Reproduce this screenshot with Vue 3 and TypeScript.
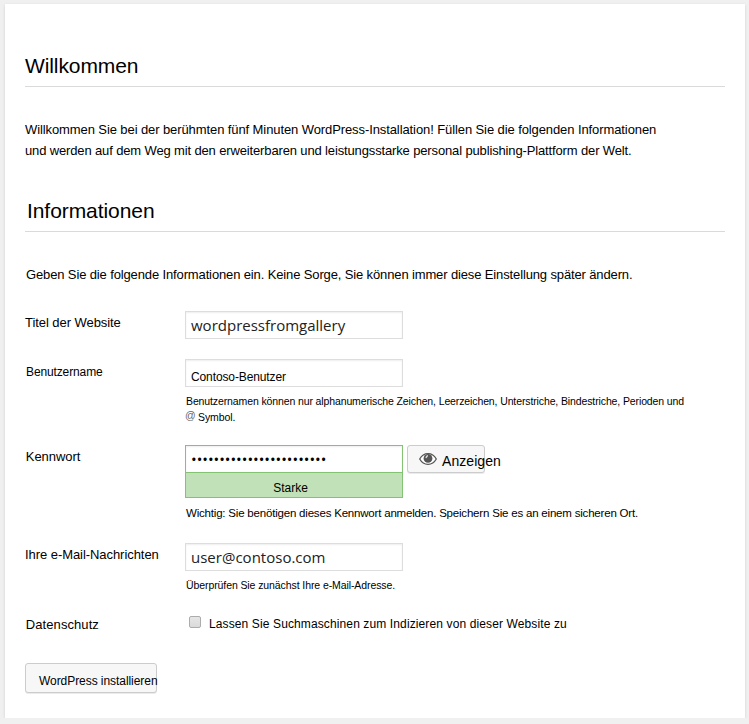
<script setup lang="ts">
import { ref } from 'vue'

const siteTitle = ref('wordpressfromgallery')
const userName = ref('Contoso-Benutzer')
const email = ref('user@contoso.com')
const passwordMask = '•'.repeat(24)
</script>

<template>
  <main class="card">
    <h1 class="heading">Willkommen</h1>
    <p class="welcome">
      <span class="line first">Willkommen Sie bei der berühmten fünf Minuten WordPress-Installation! Füllen Sie die folgenden Informationen</span>
      <span class="line second">und werden auf dem Weg mit den erweiterbaren und leistungsstarke personal publishing-Plattform der Welt.</span>
    </p>
    <h2 class="heading info">Informationen</h2>
    <p class="intro">Geben Sie die folgende Informationen ein. Keine Sorge, Sie können immer diese Einstellung später ändern.</p>

    <form class="form" @submit.prevent>
      <div class="row title-row">
        <label class="label">Titel der Website</label>
        <div class="box open">{{ siteTitle }}</div>
      </div>
      <div class="row user-row">
        <label class="label small">Benutzername</label>
        <div>
          <div class="box user">{{ userName }}</div>
          <p class="help names">
            Benutzernamen können nur alphanumerische Zeichen, Leerzeichen, Unterstriche, Bindestriche, Perioden und<br />
            <span class="at">@</span><span class="symbol">Symbol.</span>
          </p>
        </div>
      </div>
      <div class="row password-row">
        <label class="label inset">Kennwort</label>
        <div>
          <div class="password">
            <div class="strength-group">
              <div class="box open secure">{{ passwordMask }}</div>
              <div class="strength">Starke</div>
            </div>
            <button class="button show" type="button">
              <svg class="eye" viewBox="0 0 18 14" width="18" height="14">
                <path d="M.7 7C2.500 3.800 5.400 1.700 9 1.700S15.500 3.800 17.300 7C15.500 10.200 12.600 12.300 9 12.300S2.500 10.200.700 7Z" fill="#fff" stroke="#555" stroke-width="1.300" />
                <circle cx="9" cy="6.400" r="4.400" fill="#555" />
                <path d="M7.200 5.400 8.300 3.800" stroke="#ddd" stroke-width="1.500" stroke-linecap="round" />
              </svg>
              <span>Anzeigen</span>
            </button>
          </div>
          <p class="help important">Wichtig: Sie benötigen dieses Kennwort anmelden. Speichern Sie es an einem sicheren Ort.</p>
        </div>
      </div>
      <div class="row email-row">
        <label class="label">Ihre e-Mail-Nachrichten</label>
        <div>
          <div class="box open mail">{{ email }}</div>
          <p class="help check-mail">Überprüfen Sie zunächst Ihre e-Mail-Adresse.</p>
        </div>
      </div>
      <div class="row privacy-row">
        <label class="label inset privacy">Datenschutz</label>
        <label class="option"><span class="checkbox"></span>Lassen Sie Suchmaschinen zum Indizieren von dieser Website zu</label>
      </div>
      <button class="button install" type="submit">WordPress installieren</button>
    </form>
  </main>
</template>

<style>
body {
  background: #f0f0f0;
}
</style>

<style scoped>
.card {
  box-sizing: border-box;
  display: flow-root;
  width: 740px;
  height: 714px;
  margin: 4px 0 0 5px;
  padding: 46px 20px 0;
  background: #fff;
  box-shadow: 0 1px 3px rgba(0, 0, 0, 0.13);
  color: #000;
  font: 13px/21px "Liberation Sans", Arial, sans-serif;
  white-space: nowrap;
}
p {
  margin: 0;
}
.heading {
  box-sizing: border-box;
  height: 37px;
  margin: 0;
  border-bottom: 1px solid #dadada;
  font-size: 21px;
  font-weight: 400;
  line-height: 32px;
  letter-spacing: -0.1px;
}
.welcome {
  margin-top: 32px;
}
.line {
  display: block;
}
.first {
  letter-spacing: -0.095px;
}
.second {
  letter-spacing: -0.139px;
}
.info {
  margin-top: 34px;
  padding-left: 2px;
  letter-spacing: -0.07px;
}
.intro {
  margin-top: 32px;
  padding-left: 1px;
  letter-spacing: -0.131px;
}
.form {
  margin-top: 26px;
}
.row {
  display: grid;
  grid-template-columns: 160px 1fr;
  align-items: start;
}
.title-row {
  height: 48px;
}
.user-row {
  height: 86px;
}
.password-row {
  height: 98px;
}
.email-row {
  height: 69px;
}
.privacy-row {
  height: 51px;
}
.label {
  padding-top: 2px;
  line-height: 20px;
  letter-spacing: -0.06px;
}
.small {
  padding: 3px 0 0 1px;
  font-size: 12px;
  letter-spacing: -0.125px;
}
.inset {
  padding-left: 0.8px;
}
.privacy {
  padding-top: 3px;
  letter-spacing: 0.08px;
}
.box {
  box-sizing: border-box;
  width: 218px;
  height: 28px;
  padding-left: 5px;
  border: 1px solid #ddd;
  background: #fff;
  box-shadow: inset 0 1px 2px rgba(0, 0, 0, 0.07);
}
.open {
  color: #222;
  font-family: "Open Sans", sans-serif;
  font-size: 15px;
  line-height: 26px;
}
.mail {
  letter-spacing: 0.01px;
}
.user {
  font-size: 12px;
  line-height: 34px;
  letter-spacing: -0.115px;
}
.help {
  margin-top: 6px;
  padding-left: 1px;
  font-size: 10.5px;
  line-height: 16px;
}
.names {
  letter-spacing: -0.118px;
}
.at {
  display: inline-block;
  width: 12px;
  margin-left: -1px;
  color: #666;
  font-size: 10.5px;
  line-height: 12px;
  vertical-align: 2px;
}
.symbol {
  margin-left: 1px;
  letter-spacing: -0.1px;
}
.password {
  display: flex;
  align-items: flex-start;
  gap: 4px;
}
.secure {
  border-color: #83c373;
  color: #000;
}
.strength {
  box-sizing: border-box;
  width: 218px;
  height: 25px;
  border: 1px solid #83c373;
  border-top: 0;
  padding-right: 7px;
  background: #c1e1b9;
  font-size: 12px;
  line-height: 30px;
  text-align: center;
}
.important {
  margin-top: 7px;
  font-size: 11.5px;
  letter-spacing: -0.196px;
}
.check-mail {
  letter-spacing: -0.09px;
}
.button {
  box-sizing: border-box;
  display: flex;
  align-items: center;
  border: 1px solid #ccc;
  border-radius: 3px;
  background: #f7f7f7;
  box-shadow: 0 1px 0 rgba(0, 0, 0, 0.08);
  color: #000;
  font-family: "Liberation Sans", Arial, sans-serif;
  white-space: nowrap;
}
.show {
  width: 78px;
  height: 28px;
  padding: 3px 0 0 11px;
  gap: 5px;
  font-size: 14px;
  letter-spacing: 0.06px;
}
.eye {
  flex: none;
  margin-top: -3px;
}
.option {
  display: flex;
  align-items: center;
  padding: 2px 0 0 4px;
  gap: 8px;
  font-size: 12px;
  line-height: 20px;
  letter-spacing: 0.118px;
}
.checkbox {
  box-sizing: border-box;
  width: 12px;
  height: 12px;
  margin-top: -4px;
  border: 1px solid #acacac;
  border-radius: 2px;
  background: linear-gradient(#e6e6e6, #dadada);
}
.install {
  width: 132px;
  height: 30px;
  padding: 5px 0 0 13px;
  font-size: 12px;
  letter-spacing: -0.06px;
}
</style>
